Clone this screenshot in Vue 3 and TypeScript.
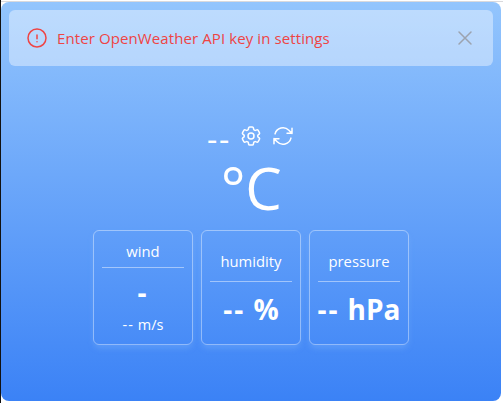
<script setup lang="ts">
import { ref } from 'vue'

interface Metric {
  label: string
  value: string
  unit?: string
  note?: string
}

const showAlert = ref(true)
const temperature = ref('--')
const metrics: Metric[] = [
  { label: 'wind', value: '-', note: 'm/s' },
  { label: 'humidity', value: '--', unit: '%' },
  { label: 'pressure', value: '--', unit: 'hPa' },
]
</script>

<template>
  <div class="page">
    <main class="widget">
      <div class="alert" :class="{ hidden: !showAlert }">
        <svg class="icon" viewBox="0 0 24 24">
          <path d="M12 9v3.75m9-.75a9 9 0 11-18 0 9 9 0 0118 0zm-9 3.75h.008v.008H12v-.008z" />
        </svg>
        <span class="message">Enter OpenWeather API key in settings</span>
        <svg class="icon close" viewBox="0 0 24 24" @click="showAlert = false">
          <path d="M6 18L18 6M6 6l12 12" />
        </svg>
      </div>

      <div class="toolbar">
        <span class="city">{{ temperature }}</span>
        <svg class="icon" viewBox="0 0 24 24">
          <path d="M9.594 3.94c.09-.542.56-.94 1.11-.94h2.593c.55 0 1.02.398 1.11.94l.213 1.281c.063.374.313.686.645.87.074.04.147.083.22.127.324.196.72.257 1.075.124l1.217-.456a1.125 1.125 0 011.37.49l1.296 2.247a1.125 1.125 0 01-.26 1.431l-1.003.827c-.293.24-.438.613-.431.992a6.759 6.759 0 010 .255c-.007.378.138.75.43.99l1.005.828c.424.35.534.954.26 1.43l-1.298 2.247a1.125 1.125 0 01-1.369.491l-1.217-.456c-.355-.133-.75-.072-1.076.124a6.57 6.57 0 01-.22.128c-.331.183-.581.495-.644.869l-.213 1.28c-.09.543-.56.941-1.11.941h-2.594c-.55 0-1.02-.398-1.11-.94l-.213-1.281c-.062-.374-.312-.686-.644-.87a6.52 6.52 0 01-.22-.127c-.325-.196-.72-.257-1.076-.124l-1.217.456a1.125 1.125 0 01-1.369-.49l-1.297-2.247a1.125 1.125 0 01.26-1.431l1.004-.827c.292-.24.437-.613.43-.992a6.932 6.932 0 010-.255c.007-.378-.138-.75-.43-.99l-1.004-.828a1.125 1.125 0 01-.26-1.43l1.297-2.247a1.125 1.125 0 011.37-.491l1.216.456c.356.133.751.072 1.076-.124.072-.044.146-.087.22-.128.332-.183.582-.495.644-.869l.214-1.281z" />
          <path d="M15 12a3 3 0 11-6 0 3 3 0 016 0z" />
        </svg>
        <svg class="icon" viewBox="0 0 24 24">
          <path d="M16.023 9.348h4.992v-.001M2.985 19.644v-4.992m0 0h4.992m-4.993 0l3.181 3.183a8.25 8.25 0 0013.803-3.7M4.031 9.865a8.25 8.25 0 0113.803-3.7l3.181 3.182m0-4.991v4.99" />
        </svg>
      </div>

      <div class="degrees">°C</div>

      <div class="cards">
        <section v-for="m in metrics" :key="m.label" class="card" :class="{ detailed: m.note }">
          <h2 class="label">{{ m.label }}</h2>
          <p class="value">
            <span class="dash">{{ m.value }}</span><span v-if="m.unit" class="unit">{{ m.unit }}</span>
          </p>
          <p v-if="m.note" class="note"><span class="note-dash">--</span> {{ m.note }}</p>
        </section>
      </div>
    </main>
  </div>
</template>

<style>
body {
  margin: 0;
  background: #fff;
}
</style>

<style scoped>
.page {
  box-sizing: border-box;
  height: 403px;
  padding: 1px 2px 2px 0;
  border-left: 1px solid #111;
  background: linear-gradient(#d9d9dc, #d9d9dc) 0 1px / 100% 1px no-repeat #fff;
  font-family: 'Open Sans', 'Noto Sans', sans-serif;
  color: #fff;
}
.widget {
  box-sizing: border-box;
  width: 500px;
  height: 399px;
  margin-top: 1px;
  padding: 8px;
  border-radius: 8px;
  background: linear-gradient(#93c5fd, #3b82f6);
  display: flex;
  flex-direction: column;
  align-items: center;
}
.icon {
  width: 24px;
  height: 24px;
  flex: none;
  fill: none;
  stroke: currentColor;
  stroke-width: 1.5;
  stroke-linecap: round;
  stroke-linejoin: round;
}
.alert {
  box-sizing: border-box;
  width: 484px;
  height: 56px;
  flex: none;
  padding: 0 16px;
  border-radius: 6px;
  background: rgba(255, 255, 255, 0.4);
  color: #ef4444;
  display: flex;
  align-items: center;
  gap: 8px;
}
.hidden {
  visibility: hidden;
}
.message {
  flex: 1;
  font-size: 15px;
  line-height: 24px;
  letter-spacing: 0.1px;
  white-space: nowrap;
}
.close {
  color: #9ca3af;
  cursor: pointer;
}
.toolbar {
  height: 36px;
  margin-top: 52px;
  display: flex;
  align-items: center;
  gap: 8px;
}
.city {
  width: 24px;
  padding-top: 5px;
  font-size: 32px;
  line-height: 32px;
  letter-spacing: 1.7px;
  white-space: nowrap;
}
.degrees {
  height: 60px;
  margin-top: 4px;
  font-size: 58px;
  line-height: 60px;
  letter-spacing: -0.5px;
}
.cards {
  display: flex;
  gap: 8px;
  margin-top: 12px;
}
.card {
  box-sizing: border-box;
  width: 100px;
  height: 115px;
  padding: 0 8px;
  border: 1px solid rgba(255, 255, 255, 0.4);
  border-radius: 6px;
  box-shadow: 0 4px 6px -1px rgba(147, 197, 253, 0.3);
  display: flex;
  flex-direction: column;
  justify-content: center;
  text-align: center;
}
.label {
  margin: 0;
  padding-bottom: 8px;
  border-bottom: 1px solid rgba(255, 255, 255, 0.45);
  font-size: 14.8px;
  font-weight: 500;
  line-height: 24px;
}
.value {
  margin: 8px 0 0;
  font-size: 28px;
  font-weight: 700;
  line-height: 38px;
  height: 36px;
  display: flex;
  justify-content: center;
  gap: 8px;
  white-space: nowrap;
}
.dash {
  letter-spacing: 2px;
}
.detailed .label {
  padding-bottom: 4px;
}
.detailed .value {
  margin-top: 5px;
}
.note {
  margin: 6px 0 1px;
  font-size: 14.5px;
  font-weight: 500;
  line-height: 20px;
}
.note-dash {
  letter-spacing: 1px;
}
</style>
